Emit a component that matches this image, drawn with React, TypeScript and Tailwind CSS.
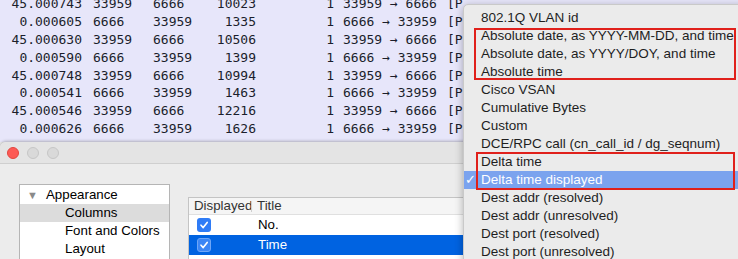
import React from "react";

const packets = [
  ["45.000743", "33959", "6666", "10023", "1", "33959 → 6666"],
  ["0.000605", "6666", "33959", "1335", "1", "6666 → 33959"],
  ["45.000630", "33959", "6666", "10506", "1", "33959 → 6666"],
  ["0.000590", "6666", "33959", "1399", "1", "6666 → 33959"],
  ["45.000748", "33959", "6666", "10994", "1", "33959 → 6666"],
  ["0.000541", "6666", "33959", "1463", "1", "6666 → 33959"],
  ["45.000546", "33959", "6666", "12216", "1", "33959 → 6666"],
  ["0.000626", "6666", "33959", "1626", "1", "6666 → 33959"],
];

const menuItems = [
  "802.1Q VLAN id",
  "Absolute date, as YYYY-MM-DD, and time",
  "Absolute date, as YYYY/DOY, and time",
  "Absolute time",
  "Cisco VSAN",
  "Cumulative Bytes",
  "Custom",
  "DCE/RPC call (cn_call_id / dg_seqnum)",
  "Delta time",
  "Delta time displayed",
  "Dest addr (resolved)",
  "Dest addr (unresolved)",
  "Dest port (resolved)",
  "Dest port (unresolved)",
];

export default function App() {
  return (
    <div className="relative w-[738px] h-[259px] overflow-hidden bg-[#ececec] font-['Liberation_Sans',Arial,sans-serif]">
      {renderPacketList()}
      {renderDialog()}
      {renderMenu()}
    </div>
  );

  function renderPacketList() {
    return (
      <div className="h-[142px] overflow-hidden bg-[#e7e6fa] text-[13px] text-[#1b1e2c] font-['DejaVu_Sans_Mono',monospace]">
        <div className="-mt-[5px]">
          {packets.map((p, i) => (
            <div key={i} className="flex h-[17.85px] items-center whitespace-nowrap">
              <span className="w-[82px] text-right">{p[0]}</span>
              <span className="ml-[11px] w-[60px]">{p[1]}</span>
              <span className="w-[47px]">{p[2]}</span>
              <span className="w-[56px] text-right">{p[3]}</span>
              <span className="w-[78px] text-right">{p[4]}</span>
              <span className="ml-[9px] w-[104px]">{p[5]}</span>
              {/* rest of the info column sits under the popup */}
              <span className="w-[16px] overflow-hidden">[PS</span>
            </div>
          ))}
        </div>
      </div>
    );
  }

  function renderDialog() {
    return (
      <div className="h-[117px] rounded-t-[6px] bg-[#ececec] shadow-[0_-1px_3px_rgba(0,0,0,0.25)] text-[13px] text-black">
        <div className="flex h-[22px] items-center gap-[8px] rounded-t-[6px] border-b border-[#cfcfcf] bg-[#e4e4e4] pl-[7px] pt-[1px]">
          <span className="h-[12px] w-[12px] rounded-full bg-[#fd5a55] border border-[#e2463f]" />
          <span className="h-[12px] w-[12px] rounded-full bg-[#d9d9d9] border border-[#c6c6c6]" />
          <span className="h-[12px] w-[12px] rounded-full bg-[#d9d9d9] border border-[#c6c6c6]" />
        </div>
        <div className="flex pl-[19px] pt-[20px] text-[13.3px]">
          <div className="h-[80px] w-[151px] border border-[#b5b5b5] bg-white pt-[1px]">
            <div className="flex h-[18px] items-center">
              <span className="ml-[7px] w-[19px] text-[11px] text-[#8a8a8a]">▼</span>
              <span>Appearance</span>
            </div>
            <div className="flex h-[18px] items-center bg-[#dcdcdc] pl-[45px]">Columns</div>
            <div className="flex h-[18px] items-center pl-[45px]">Font and Colors</div>
            <div className="flex h-[18px] items-center pl-[45px]">Layout</div>
          </div>
          <div className="ml-[18px] mt-[13px] h-[70px] w-[276px] border-l border-t border-[#c4c4c4] bg-white">
            <div className="flex h-[17px] items-center border-b border-[#e0e0e0] bg-[#f5f5f5] text-[#333]">
              <span className="pl-[5px] w-[62px]">Displayed</span>
              <span className="h-[11px] border-l border-[#cfcfcf]" />
              <span className="pl-[5px]">Title</span>
            </div>
            {renderRow("No.", false, true)}
            {renderRow("Time", true, true)}
            {renderRow("", false, false)}
          </div>
        </div>
      </div>
    );
  }

  function renderRow(title: string, selected: boolean, checked: boolean) {
    return (
      <div
        className={
          selected
            ? "flex h-[20px] items-center bg-[#0063e1] text-white"
            : "flex h-[20px] items-center"
        }
      >
        <span className="ml-[8px] w-[61px]">
          {checked ? (
            <span
              className={
                selected
                  ? "flex h-[14px] w-[14px] items-center justify-center rounded-[3px] bg-[#3b86f5] border border-[#6ea6f7]"
                  : "flex h-[14px] w-[14px] items-center justify-center rounded-[3px] bg-[#2f7cf6]"
              }
            >
              <svg width="10" height="10" viewBox="0 0 10 10">
                <path d="M2 5.2 L4.2 7.6 L8.2 2.4" fill="none" stroke="white" strokeWidth="1.6" strokeLinecap="round" strokeLinejoin="round" />
              </svg>
            </span>
          ) : (
            <span className="block h-[14px] w-[14px] rounded-[3px] border border-[#b8b8b8] bg-white mt-[6px]" />
          )}
        </span>
        <span>{title}</span>
      </div>
    );
  }

  function renderMenu() {
    return (
      <div className="absolute left-[463px] top-[4px] w-[290px] h-[270px] rounded-[5px] border border-[#c9c9c9] bg-[#ebebeb] pt-[4px] shadow-[0_2px_8px_rgba(0,0,0,0.3)] text-[13.5px] text-[#1e1e1e]">
        {menuItems.map((item, i) =>
          i === 9 ? (
            <div key={i} className="relative flex h-[18px] items-center bg-[#7ba3ee] pl-[17px] text-white whitespace-nowrap">
              <span className="absolute left-[1px] text-[13px]">✓</span>
              {item}
            </div>
          ) : (
            <div key={i} className="flex h-[18px] items-center pl-[17px] whitespace-nowrap">
              {item}
            </div>
          )
        )}
        <div className="absolute left-[10px] top-[23px] h-[52px] w-[262px] border-2 border-[#e0201b]" />
        <div className="absolute left-[12px] top-[147px] h-[38px] w-[259px] border-2 border-[#e0201b]" />
      </div>
    );
  }
}
